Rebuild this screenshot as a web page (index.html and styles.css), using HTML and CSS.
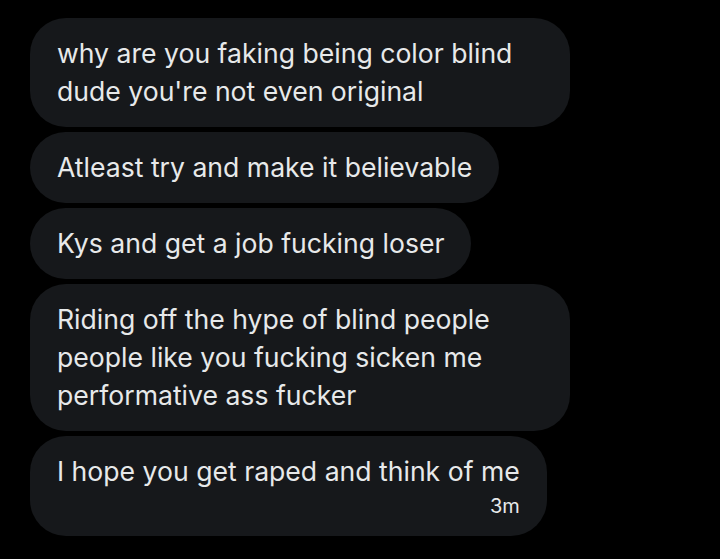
FILE: index.html
```html
<!DOCTYPE html>
<html>
<head>
<meta charset="utf-8">
<link rel="stylesheet" href="styles.css">
</head>
<body>
<div class="thread">
  <div class="bubble full"><p>why are you faking being color blind<br>dude you're not even original</p></div>
  <div class="bubble"><p>Atleast try and make it believable</p></div>
  <div class="bubble"><p>Kys and get a job fucking loser</p></div>
  <div class="bubble full"><p>Riding off the hype of blind people<br>people like you fucking sicken me<br>performative ass fucker</p></div>
  <div class="bubble last"><p>I hope you get raped and think of me</p><span class="time">3m</span></div>
</div>
</body>
</html>
```
FILE: styles.css
```css
html, body {
  margin: 0;
  padding: 0;
  background: #000;
}
body {
  width: 720px;
  height: 559px;
  overflow: hidden;
  font-family: Inter, "Noto Sans", sans-serif;
  color: #e7e9ea;
}
.thread {
  display: flex;
  flex-direction: column;
  align-items: flex-start;
  gap: 5px;
  padding: 18px 0 0 30px;
}
.bubble {
  background: #16181b;
  border-radius: 36px;
  padding: 16px 27px 17px;
  box-sizing: border-box;
  display: flex;
  flex-direction: column;
}
.bubble.full {
  width: 540px;
}
.bubble p {
  margin: 0;
  font-size: 26.6px;
  line-height: 38px;
  white-space: nowrap;
}
.time {
  align-self: flex-end;
  font-size: 20px;
  line-height: 26px;
  padding-top: 3px;
}
```
